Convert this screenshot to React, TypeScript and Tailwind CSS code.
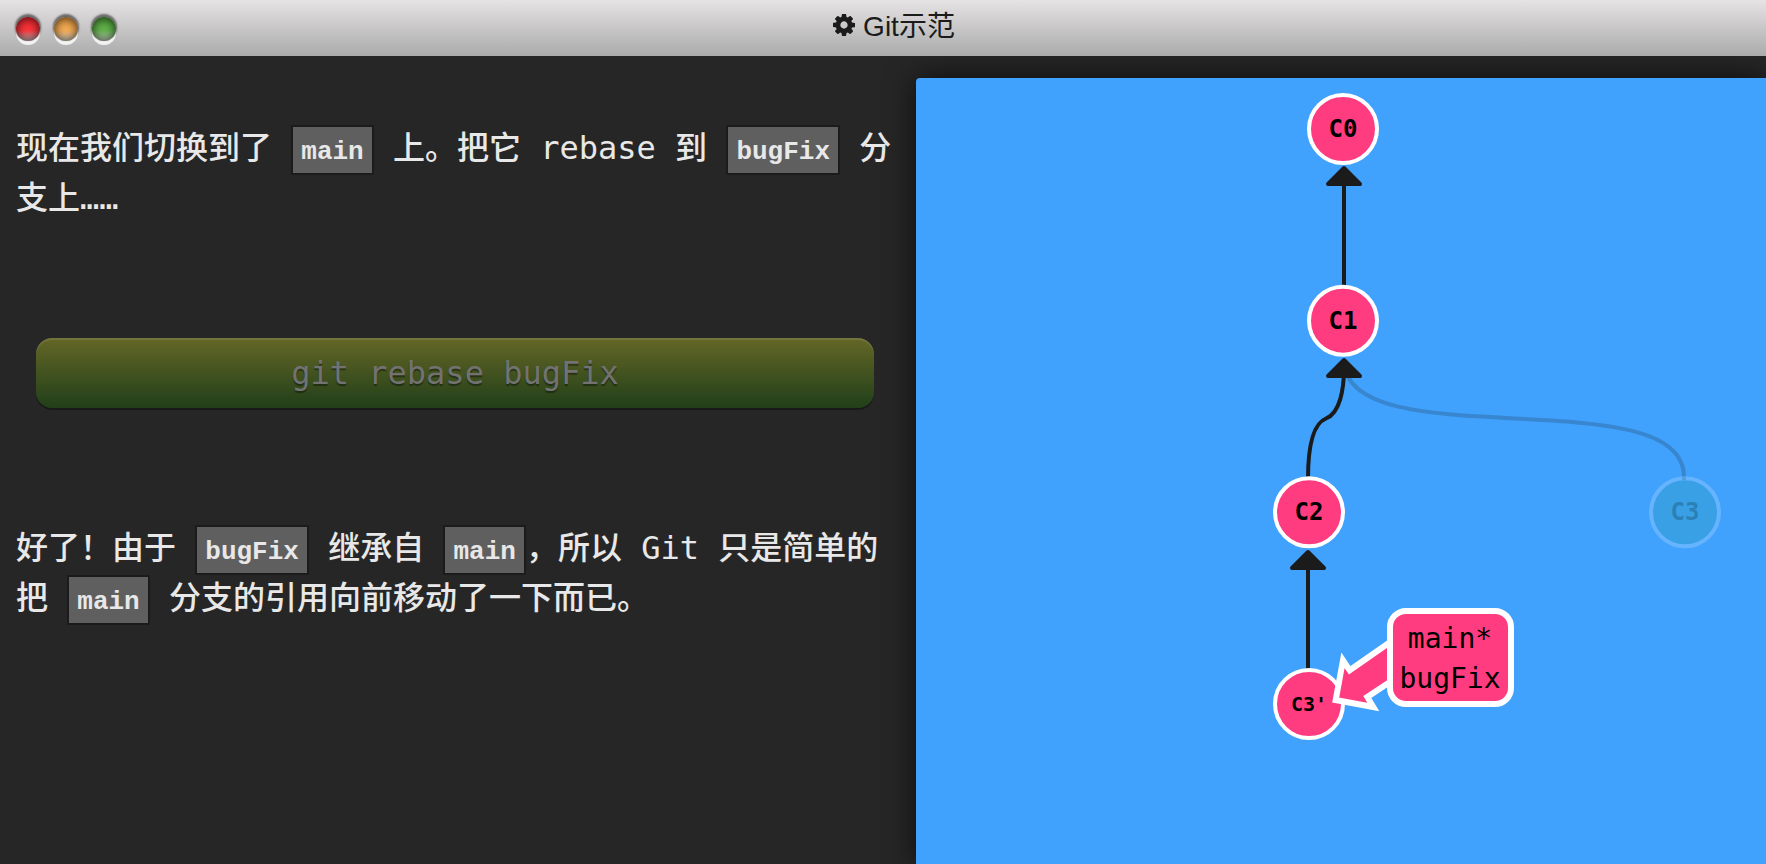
import type { ReactNode } from 'react';

const GEAR_PATH =
  'M1152 896q0-106-75-181t-181-75-181 75-75 181 75 181 181 75 181-75 75-181zm512-109v222q0 12-8 23t-20 13l-185 28q-19 54-39 91 35 50 107 138 10 12 10 25t-9 23q-27 37-99 108t-94 71q-12 0-26-9l-138-108q-44 23-91 38-16 136-29 186-7 28-36 28h-222q-14 0-24.5-8.5t-11.5-21.5l-28-184q-49-16-90-37l-141 107q-10 9-25 9-14 0-25-11-126-114-165-168-7-10-7-23 0-12 8-23 15-21 51-66.5t54-70.5q-27-50-41-99l-183-27q-13-2-21-12.5t-8-23.5v-222q0-12 8-23t19-13l186-28q14-46 39-92-40-57-107-138-10-12-10-24 0-10 9-23 26-36 98.5-107.5t94.5-71.5q13 0 26 10l138 107q44-23 91-38 16-136 29-186 7-28 36-28h222q14 0 24.5 8.5t11.5 21.5l28 184q49 16 90 37l142-107q9-9 24-9 13 0 25 10 129 119 165 170 7 8 7 22 0 12-8 23-15 21-51 66.5t-54 70.5q26 50 41 98l183 28q13 2 21 12.5t8 23.5z';

const LIGHT_BASE =
  'size-6 rounded-full shadow-[inset_0_0_8px_1px_rgba(0,0,0,0.65),0_-2px_2px_1px_rgba(0,0,0,0.5),0_4px_0_#f2f2f2]';

function TitleBar() {
  return (
    <header className="relative flex h-14 items-center justify-center bg-linear-to-b from-[#e6e3e5] to-[#ababab] pb-0.5 pl-[22px]">
      <div className="absolute top-[17px] left-4 flex gap-[14px]">
        <button
          type="button"
          aria-label="Close"
          className={`${LIGHT_BASE} bg-[linear-gradient(to_bottom,#e0252c_0%,#fb353b_55%,#c9a3a5_95%)]`}
        />
        <button
          type="button"
          aria-label="Minimize"
          className={`${LIGHT_BASE} bg-[linear-gradient(to_bottom,#dd9540_0%,#f4ac55_55%,#d8c8b0_95%)]`}
        />
        <button
          type="button"
          aria-label="Zoom"
          className={`${LIGHT_BASE} bg-[linear-gradient(to_bottom,#4c9a38_0%,#64b24c_55%,#b4c8ae_95%)]`}
        />
      </div>
      <h1 className="flex items-start gap-2 font-['Liberation_Sans','Noto_Sans_CJK_SC',sans-serif] text-[28px] leading-8 text-[#1b1b1b]">
        <svg viewBox="128 128 1536 1536" className="mt-[3px] size-[22px]" fill="currentColor" aria-hidden="true">
          <path d={GEAR_PATH} />
        </svg>
        Git示范
      </h1>
    </header>
  );
}

function Code({ children }: { children: ReactNode }) {
  return (
    <code className="border-2 border-[#1b1b1b] bg-[#5f5f5f] px-2 pt-[10px] pb-[6px] font-['Liberation_Mono',monospace] text-[26px] leading-none font-bold">
      {children}
    </code>
  );
}

const NODE_FONT = "font-['DejaVu_Sans_Mono',monospace] font-bold";

function Commit({ x, y, label, small }: { x: number; y: number; label: string; small?: boolean }) {
  return (
    <g>
      <circle cx={x} cy={y} r="34" fill="#ff3c7f" stroke="#fff" strokeWidth="4" />
      <text
        x={x}
        y={y + (small ? 7 : 8)}
        textAnchor="middle"
        className={small ? `${NODE_FONT} text-[20px]` : `${NODE_FONT} text-[24px]`}
      >
        {label}
      </text>
    </g>
  );
}

function ArrowHead({ x, y }: { x: number; y: number }) {
  return (
    <path
      d={`M${x} ${y + 2}l16 16h-32z`}
      fill="#1b1b1b"
      stroke="#1b1b1b"
      strokeWidth="4"
      strokeLinejoin="round"
    />
  );
}

function CommitTree() {
  return (
    <svg viewBox="0 0 850 786" className="block w-full" role="img" aria-label="Commit tree">
      <path
        d="M428 282C428 382 769 299 768 399"
        fill="none"
        stroke="#1b1b1b"
        strokeOpacity="0.2"
        strokeWidth="4"
      />
      <g fill="none" stroke="#1b1b1b" strokeWidth="4">
        <path d="M428 210V104" />
        <path d="M392 401C392 370 396 346 410 340.5S428 311 428 290" />
        <path d="M392 594V488" />
      </g>
      <ArrowHead x={428} y={88} />
      <ArrowHead x={428} y={280} />
      <ArrowHead x={392} y={472} />

      <Commit x={427} y={51} label="C0" />
      <Commit x={427} y={242.7} label="C1" />
      <Commit x={393} y={434.3} label="C2" />
      <Commit x={393} y={626} label="C3'" small />

      <circle cx="769" cy="434.3" r="34" fill="#39a0e6" stroke="#66b4ff" strokeWidth="4" />
      <path d="M768 398v4" stroke="#4f9fe0" strokeWidth="4" />
      <text x="769" y="442.3" textAnchor="middle" fill="#2b80b6" className={`${NODE_FONT} text-[24px]`}>
        C3
      </text>

      <path
        d="M480 560L433.7 592.3L427 582.3L419.7 622L457.3 629L451.3 619L480 600z"
        fill="#ff3c7f"
        stroke="#fff"
        strokeWidth="6"
      />
      <rect x="474" y="533" width="121" height="93" rx="16" fill="#ff3c7f" stroke="#fff" strokeWidth="6" />
      <g textAnchor="middle" className="font-['DejaVu_Sans_Mono',monospace] text-[28px]">
        <text x="534" y="570">
          main*
        </text>
        <text x="534" y="610">
          bugFix
        </text>
      </g>
    </svg>
  );
}

export default function App() {
  return (
    <div className="flex min-h-screen flex-col overflow-hidden bg-[#262626]">
      <TitleBar />
      <main className="grid grow grid-cols-[458fr_425fr]">
        <section className="flex flex-col gap-[115px] pt-[67px] pr-[22px] pl-4 font-['DejaVu_Sans_Mono','Noto_Sans_CJK_SC',monospace] text-[32px] leading-[50px] font-medium text-[#e8e8e8]">
          <p>
            现在我们切换到了 <Code>main</Code> 上。把它 rebase 到 <Code>bugFix</Code> 分支上……
          </p>
          <button
            type="button"
            className="mx-5 h-[70px] rounded-2xl bg-linear-to-b from-[#646726] to-[#203f19] text-[#727272] shadow-[inset_0_2px_0_rgba(255,255,255,0.1),0_2px_0_#19191b] [text-shadow:0_2px_1px_rgba(0,0,0,0.4)]"
          >
            git rebase bugFix
          </button>
          <p>
            好了！由于 <Code>bugFix</Code> 继承自 <Code>main</Code>，所以 Git 只是简单的把 <Code>main</Code>{' '}
            分支的引用向前移动了一下而已。
          </p>
        </section>
        <section className="mt-[22px] rounded-tl bg-[#40a2fd] shadow-[0_0_30px_rgba(0,0,0,0.7)]">
          <CommitTree />
        </section>
      </main>
    </div>
  );
}
